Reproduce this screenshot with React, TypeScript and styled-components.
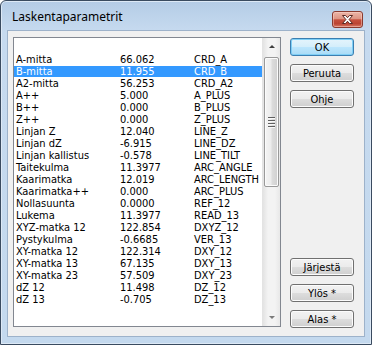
import React from "react";
import styled, { createGlobalStyle, css } from "styled-components";

interface Param {
  name: string;
  value: string;
  code: string;
}

const params: Param[] = [
  { name: "A-mitta", value: "66.062", code: "CRD_A" },
  { name: "B-mitta", value: "11.955", code: "CRD_B" },
  { name: "A2-mitta", value: "56.253", code: "CRD_A2" },
  { name: "A++", value: "5.000", code: "A_PLUS" },
  { name: "B++", value: "0.000", code: "B_PLUS" },
  { name: "Z++", value: "0.000", code: "Z_PLUS" },
  { name: "Linjan Z", value: "12.040", code: "LINE_Z" },
  { name: "Linjan dZ", value: "-6.915", code: "LINE_DZ" },
  { name: "Linjan kallistus", value: "-0.578", code: "LINE_TILT" },
  { name: "Taitekulma", value: "11.3977", code: "ARC_ANGLE" },
  { name: "Kaarimatka", value: "12.019", code: "ARC_LENGTH" },
  { name: "Kaarimatka++", value: "0.000", code: "ARC_PLUS" },
  { name: "Nollasuunta", value: "0.0000", code: "REF_12" },
  { name: "Lukema", value: "11.3977", code: "READ_13" },
  { name: "XYZ-matka 12", value: "122.854", code: "DXYZ_12" },
  { name: "Pystykulma", value: "-0.6685", code: "VER_13" },
  { name: "XY-matka 12", value: "122.314", code: "DXY_12" },
  { name: "XY-matka 13", value: "67.135", code: "DXY_13" },
  { name: "XY-matka 23", value: "57.509", code: "DXY_23" },
  { name: "dZ 12", value: "11.498", code: "DZ_12" },
  { name: "dZ 13", value: "-0.705", code: "DZ_13" },
];

const GlobalStyle = createGlobalStyle`
  body {
    margin: 0;
    background: #ffffff;
  }
`;

const App: React.FC = () => {
  return (
    <>
      <GlobalStyle />
      <Window>
        <TitleBar>
          <Title>Laskentaparametrit</Title>
          <CloseButton>
            <svg width="11" height="9" viewBox="0 0 11 9">
              <path
                d="M0.5 0.5h3l2 2.2 2-2.2h3l-3.4 4 3.4 4h-3l-2-2.2-2 2.2h-3l3.4-4z"
                fill="#ffffff"
                stroke="#5b2a24"
                strokeWidth="1"
                strokeLinejoin="round"
              />
            </svg>
          </CloseButton>
        </TitleBar>
        <Frame>
          <Client>
            <ListBox>
              <Rows>
                {params.map((p) => (
                  <Row key={p.code} selected={p.code === "CRD_B"}>
                    <NameCell>{p.name}</NameCell>
                    <ValueCell>{p.value}</ValueCell>
                    <span>{p.code}</span>
                  </Row>
                ))}
              </Rows>
              <ScrollBar>
                <ArrowButton>
                  <Arrow dir="up" />
                </ArrowButton>
                <Track>
                  <Thumb>
                    <Grip />
                    <Grip />
                    <Grip />
                    <Grip />
                  </Thumb>
                </Track>
                <ArrowButton>
                  <Arrow dir="down" />
                </ArrowButton>
              </ScrollBar>
            </ListBox>
            <ButtonColumn>
              <ButtonGroup>
                <Button primary>OK</Button>
                <Button>Peruuta</Button>
                <Button>Ohje</Button>
              </ButtonGroup>
              <ButtonGroup>
                <Button>Järjestä</Button>
                <Button>Ylös *</Button>
                <Button>Alas *</Button>
              </ButtonGroup>
            </ButtonColumn>
          </Client>
        </Frame>
      </Window>
    </>
  );
};

const uiFont = `"DejaVu Sans", "Liberation Sans", sans-serif`;

const Window = styled.div`
  width: 372px;
  height: 345px;
  box-sizing: border-box;
  border: 1px solid #3a4b60;
  border-radius: 6px 6px 0 0;
  background: linear-gradient(#b4cce6 0px, #c6daef 30px, #c4d9ee 100%);
  display: flex;
  flex-direction: column;
  box-shadow: inset 0 0 0 1px #dde9f6;
`;

const TitleBar = styled.div`
  height: 29px;
  display: flex;
  align-items: center;
  justify-content: space-between;
  padding: 0 8px 0 11px;
`;

const Title = styled.span`
  font-family: "Noto Sans", "Liberation Sans", sans-serif;
  font-size: 12px;
  color: #000000;
  margin-top: 1px;
`;

const CloseButton = styled.div`
  width: 31px;
  height: 17px;
  box-sizing: border-box;
  margin-top: 7px;
  border: 1px solid #8a3b30;
  border-radius: 3px;
  display: flex;
  align-items: center;
  justify-content: center;
  background: linear-gradient(
    #ebb5a8 0%,
    #de9584 45%,
    #c6503e 52%,
    #bb4433 78%,
    #d87a66 100%
  );
  box-shadow: inset 0 0 0 1px rgba(255, 220, 210, 0.45);
`;

const Frame = styled.div`
  flex: 1;
  display: flex;
  padding: 0 6px 7px 6px;
`;

const Client = styled.div`
  flex: 1;
  display: flex;
  align-items: flex-start;
  background: #f0f0f0;
  border: 1px solid #9db2ca;
  padding: 6px 0 0 5px;
`;

const ListBox = styled.div`
  width: 268px;
  height: 290px;
  box-sizing: border-box;
  border: 1px solid #828790;
  background: #ffffff;
  display: flex;
`;

const Rows = styled.div`
  flex: 1;
  padding-top: 15px;
`;

const Row = styled.div<{ selected?: boolean }>`
  height: 11px;
  margin: 1px 0;
  padding-left: 2px;
  display: flex;
  align-items: center;
  font-family: ${uiFont};
  font-stretch: condensed;
  font-size: 11px;
  white-space: nowrap;
  color: #000000;

  ${({ selected }) =>
    selected &&
    css`
      background: #3399ff;
      color: #ffffff;
    `};
`;

const NameCell = styled.span`
  width: 104px;
`;

const ValueCell = styled.span`
  width: 74px;
`;

const ScrollBar = styled.div`
  width: 17px;
  display: flex;
  flex-direction: column;
  background: linear-gradient(90deg, #e3e3e3, #f3f3f3 30%, #f3f3f3 70%, #e8e8e8);
  border-left: 1px solid #e3e3e3;
`;

const ArrowButton = styled.div`
  height: 17px;
  display: flex;
  align-items: center;
  justify-content: center;
`;

const Arrow = styled.div<{ dir: "up" | "down" }>`
  width: 0;
  height: 0;
  border-left: 3px solid transparent;
  border-right: 3px solid transparent;
  ${({ dir }) =>
    dir === "up"
      ? css`
          border-bottom: 3px solid #3e3e3e;
        `
      : css`
          border-top: 3px solid #7a7a7a;
        `};
`;

const Track = styled.div`
  flex: 1;
  padding-top: 2px;
`;

const Thumb = styled.div`
  height: 130px;
  margin: 0 1px;
  box-sizing: border-box;
  border: 1px solid #999999;
  border-radius: 2px;
  background: linear-gradient(90deg, #f4f4f4, #ececec 45%, #dcdcdc 55%, #cfcfcf);
  box-shadow: inset 0 0 0 1px #fbfbfb;
  display: flex;
  flex-direction: column;
  align-items: center;
  justify-content: center;
  gap: 1px;
`;

const Grip = styled.div`
  width: 7px;
  height: 1px;
  background: #5f5f5f;
  border-bottom: 1px solid #f8f8f8;
`;

const ButtonColumn = styled.div`
  width: 64px;
  height: 290px;
  margin: 1px 0 0 9px;
  display: flex;
  flex-direction: column;
  justify-content: space-between;
`;

const ButtonGroup = styled.div`
  display: flex;
  flex-direction: column;
  gap: 8px;
`;

const Button = styled.div<{ primary?: boolean }>`
  height: 18px;
  box-sizing: border-box;
  border: 1px solid #707070;
  border-radius: 3px;
  display: flex;
  align-items: center;
  justify-content: center;
  font-family: ${uiFont};
  font-stretch: condensed;
  font-size: 11px;
  color: #000000;
  background: linear-gradient(#f2f2f2 0%, #ebebeb 50%, #dddddd 51%, #cfcfcf 100%);
  box-shadow: inset 0 0 0 1px #fcfcfc;

  ${({ primary }) =>
    primary &&
    css`
      border-color: #3c7fb1;
      background: linear-gradient(#e5f4fc 0%, #d4eefb 50%, #bde6fd 51%, #a9dbf6 100%);
      box-shadow: inset 0 0 0 1px #7fcff6;
    `};
`;

export default App;
